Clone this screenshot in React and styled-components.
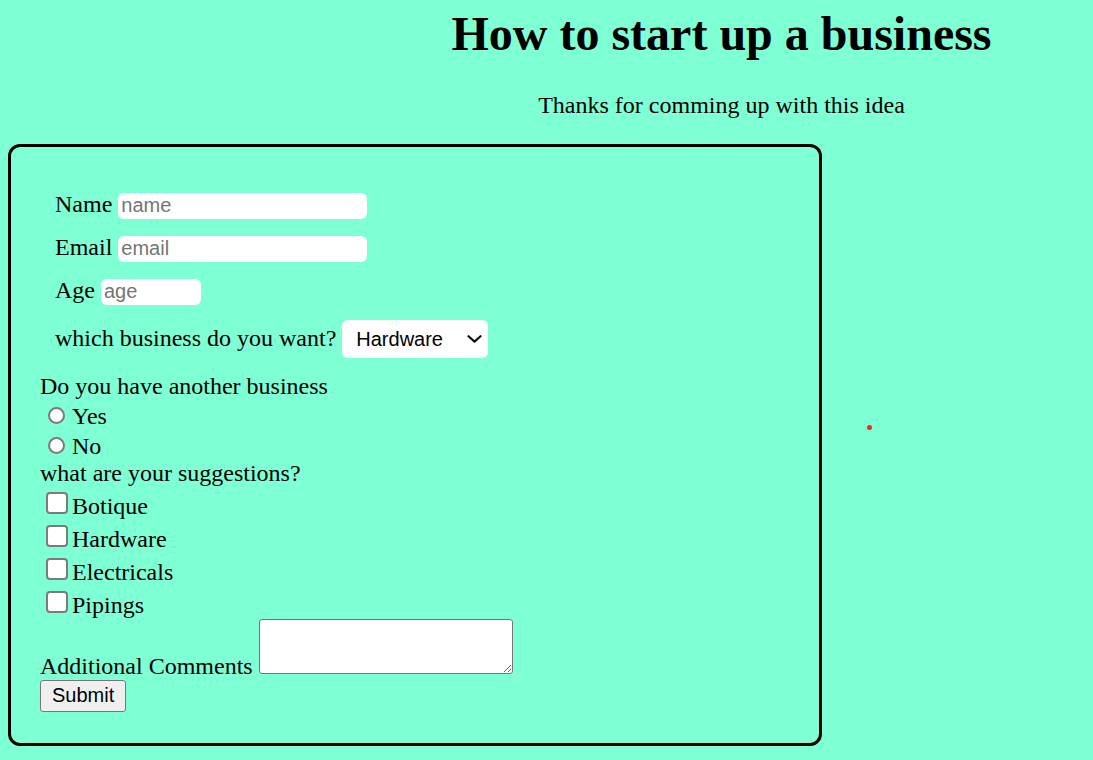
import React from "react";
import styled, { createGlobalStyle } from "styled-components";

const GlobalStyle = createGlobalStyle`
  body {
    margin: 8px;
    background-color: #7fffd4;
    font-family: "Liberation Serif", "Times New Roman", serif;
    color: #000;
  }
`;

const Header = styled.header`
  padding-left: 350px;
  text-align: center;
  h1 {
    margin: 2px 0 0;
    font-size: 48px;
    line-height: 1;
    font-weight: bold;
  }
  p {
    margin: 33px 0 0;
    font-size: 24px;
    line-height: 28px;
  }
`;

const FormBox = styled.form`
  box-sizing: border-box;
  width: calc(75% + 6px);
  margin-top: 25px;
  padding: 43px 0 31px 29px;
  border: 3px solid #000;
  border-radius: 12px;
  font-size: 24px;
  line-height: 28px;
`;

const Fields = styled.div`
  padding-left: 15px;
`;

const Field = styled.label`
  display: flex;
  align-items: baseline;
  gap: 6px;
  margin-bottom: ${(p) => p.$gap}px;
`;

const TextInput = styled.input`
  box-sizing: border-box;
  width: ${(p) => p.$w}px;
  height: 26px;
  padding: 1px 3px;
  border: none;
  border-radius: 6px;
  background: #fff;
  font: 20px "Liberation Sans", Arial, sans-serif;
  outline: none;
  &::placeholder {
    color: #757575;
  }
`;

const SelectWrap = styled.span`
  position: relative;
  display: inline-flex;
`;

const Select = styled.select`
  box-sizing: border-box;
  width: 146px;
  height: 38px;
  padding: 0 30px 0 14px;
  border: none;
  border-radius: 6px;
  background: #fff;
  color: #000;
  font: 20px "Liberation Sans", Arial, sans-serif;
  appearance: none;
  -webkit-appearance: none;
  outline: none;
`;

const Chevron = styled.svg`
  position: absolute;
  right: 6px;
  top: 15px;
  width: 15px;
  height: 8px;
  pointer-events: none;
`;

const Question = styled.div`
  line-height: ${(p) => p.$lh}px;
`;

const RadioGroup = styled.div`
  padding-top: 1px;
`;

const RadioOption = styled.label`
  display: block;
  line-height: 30px;
`;

const Radio = styled.input.attrs({ type: "radio" })`
  appearance: none;
  -webkit-appearance: none;
  box-sizing: border-box;
  width: 17px;
  height: 17px;
  margin: 3px 7px 0 8px;
  border: 2px solid #7b7b7b;
  border-radius: 50%;
  background: #fff;
  vertical-align: baseline;
`;

const CheckGroup = styled.div`
  padding-top: 4.5px;
`;

const CheckOption = styled.label`
  display: block;
  line-height: 33px;
`;

const Check = styled.input.attrs({ type: "checkbox" })`
  appearance: none;
  -webkit-appearance: none;
  box-sizing: border-box;
  width: 22px;
  height: 22px;
  margin: 2px 4px 0 6px;
  border: 2px solid #7b7b7b;
  border-radius: 4px;
  background: #fff;
  vertical-align: baseline;
`;

const CommentRow = styled.label`
  display: block;
  margin-top: -3px;
  line-height: 28px;
`;

const TextArea = styled.textarea`
  box-sizing: border-box;
  width: 254px;
  height: 55px;
  margin: 0 0 0 6px;
  border: 1px solid #767676;
  border-radius: 3px;
  background: #fff;
  vertical-align: baseline;
`;

const SubmitButton = styled.button`
  display: block;
  height: 32px;
  margin-top: 0;
  padding: 1px 11px;
  border: 1px solid #767676;
  border-radius: 3px;
  background: #efefef;
  color: #000;
  font: 20px "Liberation Sans", Arial, sans-serif;
`;

const Dot = styled.span`
  position: absolute;
  left: 867px;
  top: 425px;
  width: 5px;
  height: 5px;
  border-radius: 50%;
  background: #f22;
`;

const suggestions = ["Botique", "Hardware", "Electricals", "Pipings"];

export default function App() {
  return (
    <>
      <GlobalStyle />
      <Header>
        <h1>How to start up a business</h1>
        <p>Thanks for comming up with this idea</p>
      </Header>
      <FormBox onSubmit={(e) => e.preventDefault()}>
        <Fields>
          <Field $gap={14.5}>
            Name <TextInput $w={249} type="text" placeholder="name" />
          </Field>
          <Field $gap={14.5}>
            Email <TextInput $w={249} type="email" placeholder="email" />
          </Field>
          <Field $gap={15}>
            Age <TextInput $w={100} type="number" placeholder="age" />
          </Field>
          <Field $gap={14.5}>
            which business do you want?
            <SelectWrap>
              <Select defaultValue="Hardware">
                <option>Botique</option>
                <option>Hardware</option>
                <option>Electricals</option>
                <option>Pipings</option>
              </Select>
              <Chevron viewBox="0 0 15 8">
                <path
                  d="M1.5 1.2 L7.5 6.6 L13.5 1.2"
                  fill="none"
                  stroke="#111"
                  strokeWidth="2.2"
                  strokeLinecap="round"
                  strokeLinejoin="round"
                />
              </Chevron>
            </SelectWrap>
          </Field>
        </Fields>
        <Question $lh={28}>Do you have another business</Question>
        <RadioGroup>
          <RadioOption>
            <Radio name="another" value="yes" />Yes
          </RadioOption>
          <RadioOption>
            <Radio name="another" value="no" />No
          </RadioOption>
        </RadioGroup>
        <Question $lh={24}>what are your suggestions?</Question>
        <CheckGroup>
          {suggestions.map((s) => (
            <CheckOption key={s}>
              <Check value={s} />{s}
            </CheckOption>
          ))}
        </CheckGroup>
        <CommentRow>
          Additional Comments<TextArea />
        </CommentRow>
        <SubmitButton type="submit">Submit</SubmitButton>
      </FormBox>
      <Dot />
    </>
  );
}
